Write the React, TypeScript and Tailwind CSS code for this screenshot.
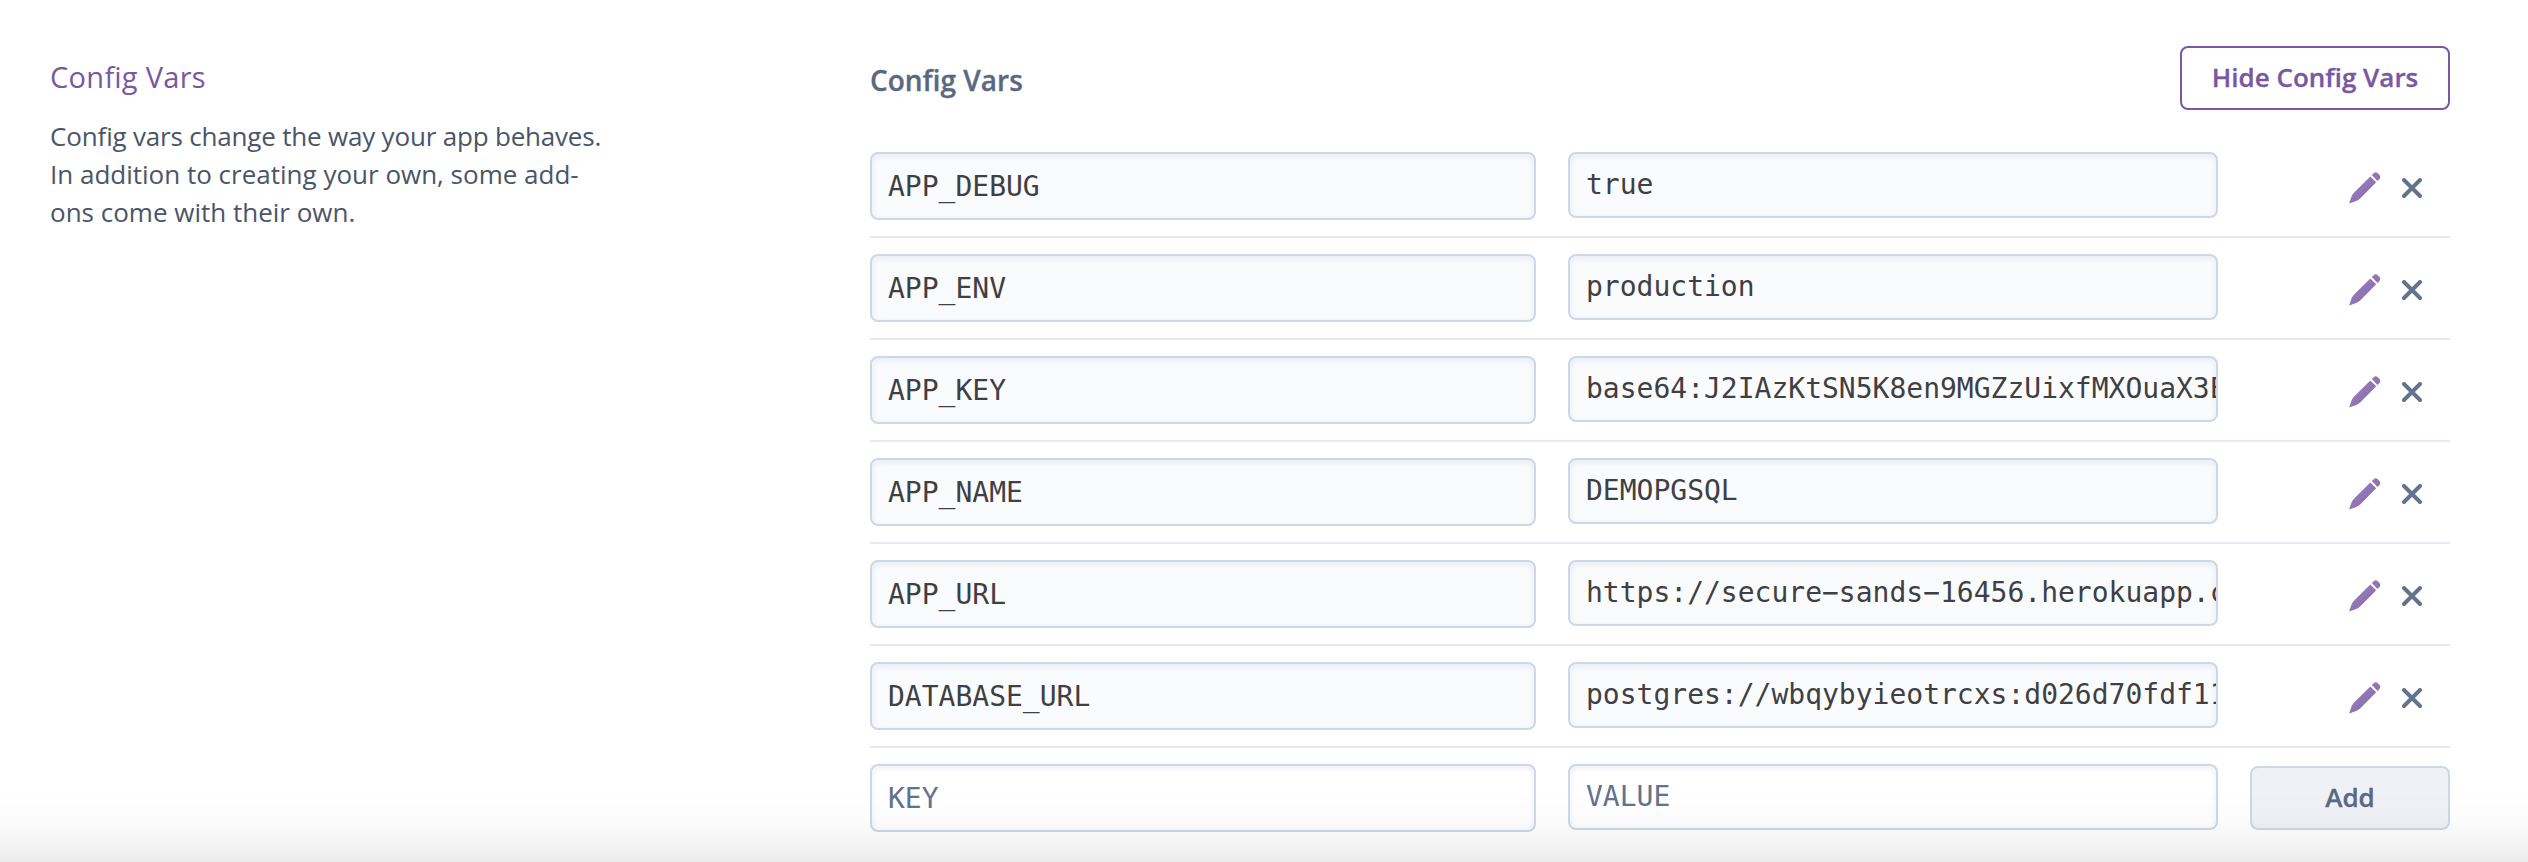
import React from "react";

const VARS = [
  { name: "APP_DEBUG", value: "true" },
  { name: "APP_ENV", value: "production" },
  { name: "APP_KEY", value: "base64:J2IAzKtSN5K8en9MGZzUixfMXOuaX3E" },
  { name: "APP_NAME", value: "DEMOPGSQL" },
  { name: "APP_URL", value: "https://secure\u2212sands\u221216456.herokuapp.c" },
  { name: "DATABASE_URL", value: "postgres://wbqybyieotrcxs:d026d70fdf11" },
];

const FIELD =
  "overflow-hidden whitespace-nowrap rounded-lg border-2 border-[#cfd7e6] pl-4 font-['DejaVu_Sans_Mono',monospace] text-[28px] shadow-[inset_0_2px_6px_rgba(207,215,230,0.45)]";

function Field({ text, kind, empty }: { text: string; kind: "key" | "value"; empty?: boolean }) {
  const size = kind === "key" ? "w-[666px] h-[68px] leading-[66px]" : "w-[650px] h-[66px] leading-[62px]";
  const tone = empty ? "bg-white text-[#62738d]" : "bg-[#fafbfd] text-[#3f3f44]";
  return <div className={`${FIELD} ${size} ${tone}`}>{text}</div>;
}

function PencilIcon() {
  return (
    <svg width="32" height="32" viewBox="0 0 32 32">
      <defs>
        <linearGradient id="pencil" x1="0" y1="0" x2="1" y2="1">
          <stop offset="0" stopColor="#9c86c0" />
          <stop offset="1" stopColor="#8664a8" />
        </linearGradient>
      </defs>
      <path
        fill="url(#pencil)"
        d="M21.3 4.4 27.2 10.3 11.4 26.2Q9 28.4 7.2 29L.9 31.2Q.1 31.4.4 30.6L2.6 24.3Q3.3 22.4 5.4 20.3ZM22.8 3.1 24.7 1.2Q26.5-.4 28.6 1.1L30.5 3.1Q32 5.2 30.5 6.9L28.5 8.9Z"
      />
    </svg>
  );
}

function CloseIcon() {
  return (
    <svg width="20" height="20" viewBox="0 0 20 20" fill="none" stroke="#62738d" strokeWidth="3.9" strokeLinecap="round">
      <path d="M2 2 18 18M18 2 2 18" />
    </svg>
  );
}

export default function App() {
  return (
    <div className="relative flex h-[862px] w-[2528px] items-start overflow-hidden bg-white pl-[50px] font-['Open_Sans',sans-serif] [font-feature-settings:'liga'_1]">
      <aside className="w-[820px] shrink-0 pt-[57px]">
        <h2 className="text-[29px] leading-[40px] tracking-[0.3px] text-[#79589f]"><span>Config Vars</span></h2>
        <p className="mt-5 text-[26px] leading-[38px] text-[#4a5568]">
          <span className="tracking-[-0.19px]">Config vars change the way your app behaves.</span>
          <br />
          <span>In addition to creating your own, some add-</span>
          <br />
          <span>ons come with their own.</span>
        </p>
      </aside>

      <main className="w-[1580px] shrink-0">
        <header className="flex h-[136px] items-start justify-between pt-[46px]">
          <h3 className="mt-[14px] text-[28px] font-semibold leading-[40px] text-[#596981] [-webkit-text-stroke:0.3px]">Config Vars</h3>
          <button className="h-16 w-[270px] rounded-lg border-2 border-[#79589f] pb-0.5 text-[26px] font-semibold leading-[56px] text-[#79589f] [-webkit-text-stroke:0.3px]">
            Hide Config Vars
          </button>
        </header>

        {VARS.map((v) => (
          <div key={v.name} className="flex h-[102px] items-start gap-8 border-b-2 border-[#e6e9f1] pt-4">
            <Field kind="key" text={v.name} />
            <Field kind="value" text={v.value} />
            <div className="flex flex-1 items-center justify-end gap-[21px] pr-7 pt-5">
              <PencilIcon />
              <CloseIcon />
            </div>
          </div>
        ))}

        <div className="flex items-start gap-8 pt-4">
          <Field kind="key" text="KEY" empty />
          <Field kind="value" text="VALUE" empty />
          <button className="mt-0.5 h-16 w-[200px] rounded-lg border-2 border-[#cfd7e6] bg-[#eff1f6] pb-0.5 text-[26px] font-semibold leading-[56px] text-[#596981] [-webkit-text-stroke:0.3px]">
            Add
          </button>
        </div>
      </main>

      <div className="pointer-events-none absolute inset-x-0 bottom-0 h-[72px] bg-[linear-gradient(to_bottom,rgba(0,0,0,0),rgba(0,0,0,0.012)_40%,rgba(0,0,0,0.04)_70%,rgba(0,0,0,0.08))]" />
    </div>
  );
}
